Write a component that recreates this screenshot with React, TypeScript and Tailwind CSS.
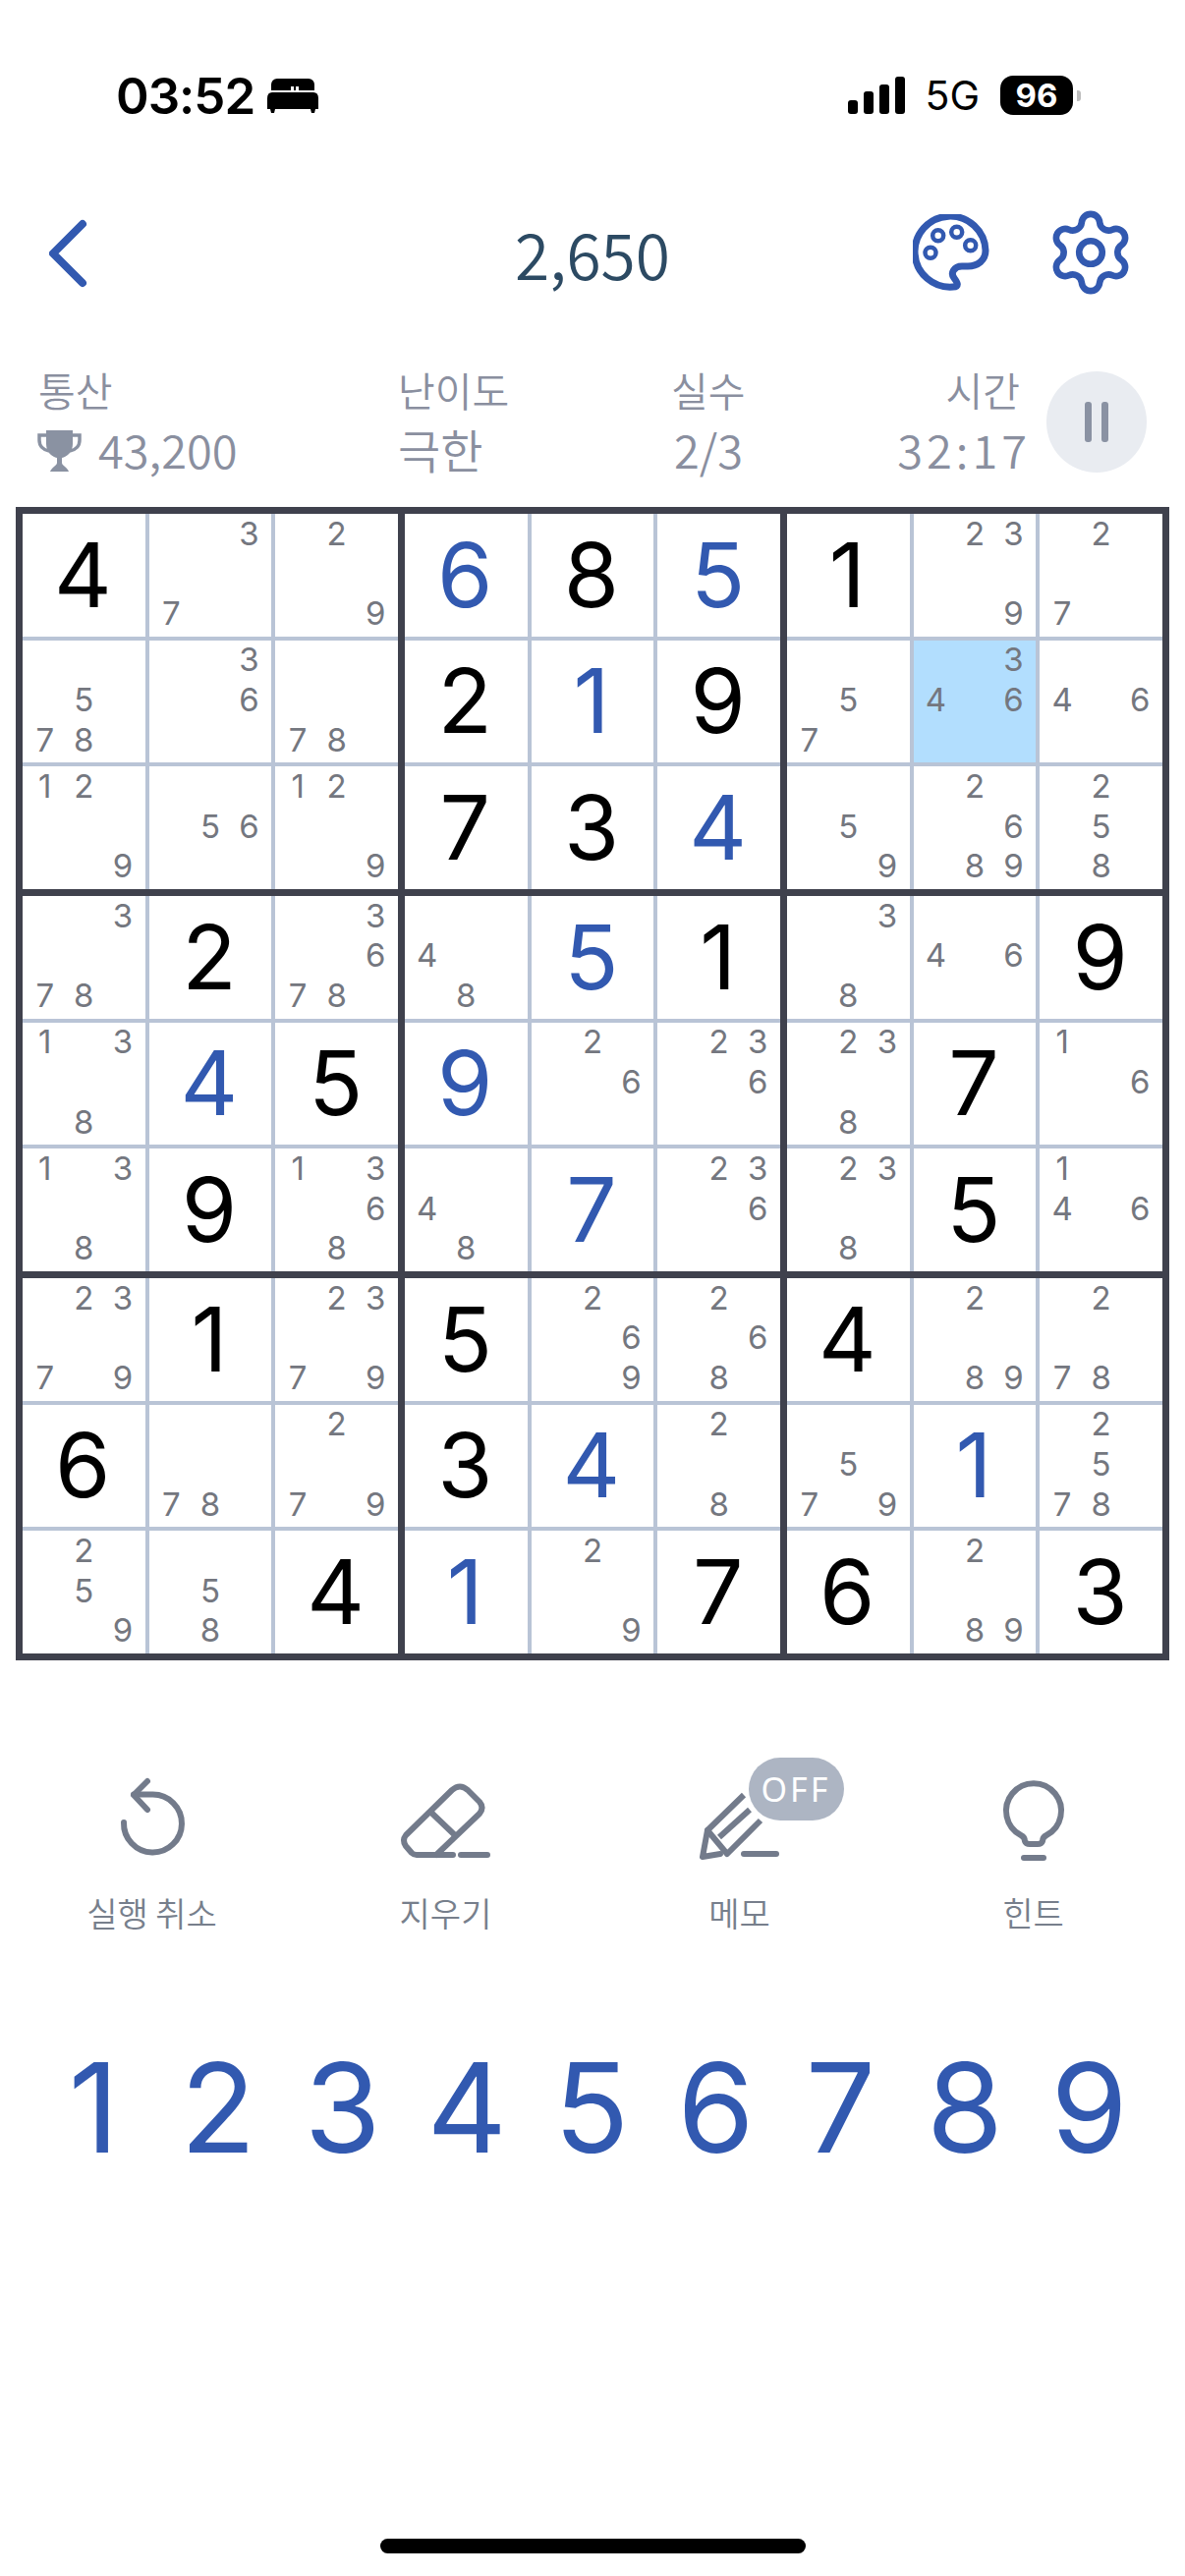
import { Settings } from "lucide-react";

const sans = "font-['Inter',sans-serif]";
const korean = "font-['Noto_Sans_CJK_KR',sans-serif]";

// "4" = given digit, "*6" = entered digit (blue), ".37" = pencil notes
const board = [
  ["4", ".37", ".29", "*6", "8", "*5", "1", ".239", ".27"],
  [".578", ".36", ".78", "2", "*1", "9", ".57", ".346", ".46"],
  [".129", ".56", ".129", "7", "3", "*4", ".59", ".2689", ".258"],
  [".378", "2", ".3678", ".48", "*5", "1", ".38", ".46", "9"],
  [".138", "*4", "5", "*9", ".26", ".236", ".238", "7", ".16"],
  [".138", "9", ".1368", ".48", "*7", ".236", ".238", "5", ".146"],
  [".2379", "1", ".2379", "5", ".269", ".268", "4", ".289", ".278"],
  ["6", ".78", ".279", "3", "*4", ".28", ".579", "*1", ".2578"],
  [".259", ".58", "4", "*1", ".29", "7", "6", ".289", "3"],
];

const noteSlots = [1, 2, 3, 4, 5, 6, 7, 8, 9];

function Cell({ value, selected }: { value: string; selected: boolean }) {
  const bg = selected ? "bg-[#b2defe]" : "bg-white";

  if (value.startsWith(".")) {
    return (
      <div className={`${bg} grid grid-cols-3 grid-rows-3 px-[3px] pb-[3px] ${sans}`}>
        {noteSlots.map((n) => (
          <span
            key={n}
            className="flex items-center justify-center text-[33px] leading-none text-[#74777f]"
          >
            {value.includes(String(n)) ? n : ""}
          </span>
        ))}
      </div>
    );
  }

  const isEntered = value.startsWith("*");
  return (
    <div
      className={`${bg} flex items-center justify-center pr-[2px] text-[91px] leading-none ${sans} ${
        isEntered ? "text-[#3259b0]" : "text-black"
      }`}
    >
      {value.replace("*", "")}
    </div>
  );
}

function Board() {
  const blocks = [0, 1, 2, 3, 4, 5, 6, 7, 8];
  return (
    <div className="ml-[16px] mt-[26px] grid h-[1174px] w-[1174px] grid-cols-3 grid-rows-3 gap-[7px] bg-[#3f414d] p-[7px]">
      {blocks.map((b) => {
        const top = Math.floor(b / 3) * 3;
        const left = (b % 3) * 3;
        return (
          <div key={b} className="grid grid-cols-3 grid-rows-3 gap-[4px] bg-[#b9c4d6]">
            {blocks.map((i) => {
              const r = top + Math.floor(i / 3);
              const c = left + (i % 3);
              return <Cell key={i} value={board[r][c]} selected={r === 1 && c === 7} />;
            })}
          </div>
        );
      })}
    </div>
  );
}

function StatusBar() {
  return (
    <div className={`flex h-[40px] mt-[77px] items-center pl-[118px] pr-[106px] text-black ${sans}`}>
      <span className="text-[51px] font-semibold leading-none tracking-[-1px]">03:52</span>
      <svg className="ml-[13px] h-[35px] w-[52px]" viewBox="0 0 52 35" fill="currentColor">
        <path d="M10 0H42a6 6 0 0 1 6 6V12H4V6a6 6 0 0 1 6-6z" />
        <rect x="24" y="8" width="3" height="4" fill="#fff" />
        <rect x="29" y="8" width="3" height="4" fill="#fff" />
        <path d="M5 14h42q5 0 5 6v11H49l-1 4h-3l-1-4H8l-1 4H4l-1-4H0V20q0-6 5-6z" />
      </svg>
      <div className="ml-auto flex items-center">
        <div className="flex h-[38px] items-end gap-[6px]">
          <span className="h-[14px] w-[10px] rounded-[3px] bg-black" />
          <span className="h-[23px] w-[10px] rounded-[3px] bg-black" />
          <span className="h-[30px] w-[10px] rounded-[3px] bg-black" />
          <span className="h-[38px] w-[10px] rounded-[3px] bg-black" />
        </div>
        <span className="ml-[20px] text-[41px] font-normal leading-none">5G</span>
        <div className="ml-[21px] flex h-[40px] w-[74px] items-center justify-center rounded-[13px] bg-black text-[33px] font-bold leading-none text-white">
          96
        </div>
        <span className="ml-[4px] h-[11px] w-[4px] rounded-r-[3px] bg-[#bdbdbd]" />
      </div>
    </div>
  );
}

function PaletteIcon() {
  return (
    <svg className="h-[78px] w-[78px]" viewBox="0 0 78 78" fill="none" stroke="currentColor" strokeWidth="7">
      <path
        strokeLinecap="round"
        strokeLinejoin="round"
        d="M41 74A36 36 0 1 1 74 37C74 47 66 53 56 53H50C42 53 38 60 42 65C45 69 48 74 41 74Z"
      />
      <g strokeWidth="4.5">
        <circle cx="25.7" cy="21.7" r="5.5" />
        <circle cx="44.7" cy="18.3" r="5.5" />
        <circle cx="58.7" cy="31.7" r="5.5" />
        <circle cx="18" cy="39.3" r="5.5" />
      </g>
    </svg>
  );
}

function Header() {
  return (
    <div className="mt-[101px] grid h-[77px] grid-cols-[1fr_auto_1fr] items-center text-[#3259b0]">
      <svg className="ml-[50px] mt-[3px] h-[70px] w-[40px]" viewBox="0 0 40 70" fill="none" stroke="currentColor" strokeWidth="8" strokeLinecap="round" strokeLinejoin="round">
        <path d="M34 5L4 35L34 65" />
      </svg>
      <span className={`text-[64px] font-[350] leading-none text-[#2c4a63] ${korean}`}>2,650</span>
      <div className="flex h-[77px] items-center justify-end gap-[65px] pr-[58px]">
        <PaletteIcon />
        <Settings size={94} strokeWidth={1.7} className="-mx-[9px] -my-[9px]" />
      </div>
    </div>
  );
}

function Trophy() {
  return (
    <svg className="h-[42px] w-[45px]" viewBox="0 0 45 42" fill="currentColor">
      <path d="M9 0H36V14C36 22 30 27 25 28V33C25 36 30 37 32 42H13C15 37 20 36 20 33V28C15 27 9 22 9 14Z" />
      <path d="M9 5H2V10C2 16 6 20 12 21M36 5H43V10C43 16 39 20 33 21" fill="none" stroke="currentColor" strokeWidth="3.5" />
    </svg>
  );
}

function Stats() {
  const label = "text-[41px] font-[350] leading-[60px]";
  const value = "text-[47px] font-[350] leading-[62px]";
  return (
    <div className={`mt-[71px] flex h-[124px] pl-[39px] text-[#8a8f9f] ${korean}`}>
      <div className="w-[366px]">
        <div className={label}>통산</div>
        <div className="flex items-center gap-[17px]">
          <span className="mt-[4px] -ml-[1px] text-[#8a92a2]">
            <Trophy />
          </span>
          <span className={value}>43,200</span>
        </div>
      </div>
      <div className="w-[278px]">
        <div className={label}>난이도</div>
        <div className={value}>극한</div>
      </div>
      <div className="w-[212px]">
        <div className={label}>실수</div>
        <div className={`${value} pl-[3px]`}>2/3</div>
      </div>
      <div className="w-[150px] text-right">
        <div className={`${label} pr-[7px]`}>시간</div>
        <div className={`${value} -mr-[4px] tracking-[4px]`}>32:17</div>
      </div>
      <div className="ml-[20px] mt-[12px] flex h-[103px] w-[102px] items-center justify-center gap-[10px] rounded-full bg-[#e9ecf1]">
        <span className="h-[41px] w-[7px] rounded-[3px] bg-[#8a92a3]" />
        <span className="h-[41px] w-[7px] rounded-[3px] bg-[#8a92a3]" />
      </div>
    </div>
  );
}

function ToolIcon({ children }: { children: React.ReactNode }) {
  return (
    <svg className="h-[90px] w-[100px]" viewBox="0 0 100 90" fill="none" stroke="currentColor" strokeWidth="6" strokeLinecap="round" strokeLinejoin="round">
      {children}
    </svg>
  );
}

function ToolLabel({ children }: { children: React.ReactNode }) {
  return (
    <span className={`mt-[26px] text-[34px] font-[350] leading-[50px] text-[#777f8c] ${korean}`}>
      {children}
    </span>
  );
}

function Toolbar() {
  return (
    <div className="ml-[5px] mt-[116px] grid w-[1196px] grid-cols-4 text-[#737b8b]">
      <div className="flex flex-col items-center">
        <ToolIcon>
          <path d="M21 49a29.5 29.5 0 1 0 29.5-28.5H31" />
          <path d="M45 7L31 21L45 36" />
        </ToolIcon>
        <ToolLabel>실행 취소</ToolLabel>
      </div>
      <div className="flex flex-col items-center">
        <ToolIcon>
          <path d="M57 82H20q-3 0-5-2l-6-7q-4-6 0-11L56 16q8-7 16 0l12 12q5 6 0 12L40 82" />
          <path d="M35 39L59 62" />
          <path d="M65 82H92" />
        </ToolIcon>
        <ToolLabel>지우기</ToolLabel>
      </div>
      <div className="flex flex-col items-center">
        <div className="relative h-[90px] w-[100px]">
          <ToolIcon>
            <path d="M54 21L17 57L37 81L71 47" strokeLinecap="butt" />
            <path d="M29 64L60 36" strokeLinecap="butt" />
            <path d="M17 57L12 84L30 81" />
            <path d="M54 81H87" />
          </ToolIcon>
          <span className="absolute left-[59px] top-[-17px] flex h-[64px] w-[97px] items-center justify-center rounded-full bg-[#adb5c3] font-['Noto_Sans',sans-serif] text-[34px] leading-none tracking-[3px] text-white">
            OFF
          </span>
        </div>
        <ToolLabel>메모</ToolLabel>
      </div>
      <div className="flex flex-col items-center">
        <ToolIcon>
          <path d="M37 62A28 28 0 1 1 63 62q-4 2-4 6q-1 3-5 3H46q-4 0-5-3q0-4-4-6Z" />
          <path d="M40 85H60" />
        </ToolIcon>
        <ToolLabel>힌트</ToolLabel>
      </div>
    </div>
  );
}

function NumberPad() {
  return (
    <div className={`ml-[32px] mt-[113px] grid w-[1140px] grid-cols-9 text-[#3259b0] ${sans}`}>
      {noteSlots.map((n) => (
        <span key={n} className="text-center text-[126px] leading-[120px]">
          {n}
        </span>
      ))}
    </div>
  );
}

export default function App() {
  return (
    <div className="flex h-[2622px] w-[1206px] flex-col overflow-hidden bg-white">
      <StatusBar />
      <Header />
      <Stats />
      <Board />
      <Toolbar />
      <NumberPad />
      <div className="mx-auto mt-[379px] h-[15px] w-[433px] shrink-0 rounded-full bg-black" />
    </div>
  );
}
